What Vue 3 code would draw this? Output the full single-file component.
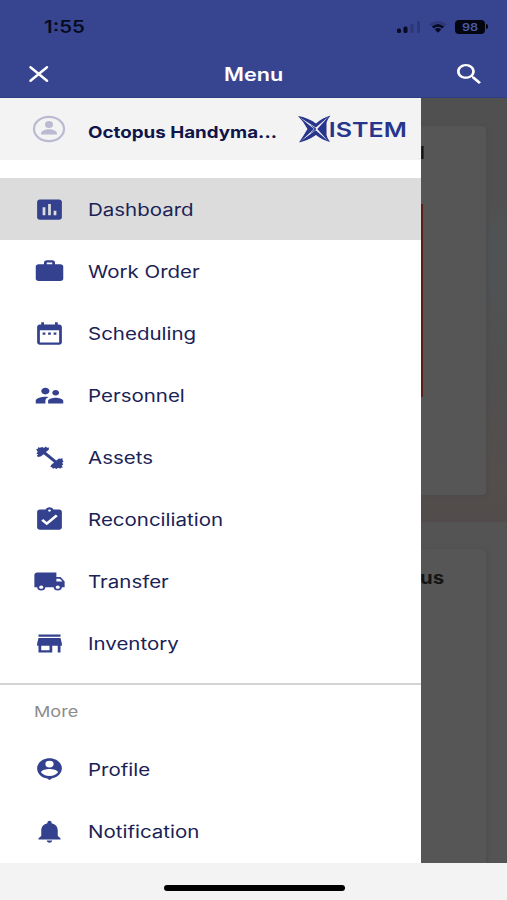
<script setup>
const mainItems = [
  { label: 'Dashboard', icon: 'M19 3H5c-1.1 0-2 .9-2 2v14c0 1.1.9 2 2 2h14c1.1 0 2-.9 2-2V5c0-1.1-.9-2-2-2zM9 17H7v-7h2v7zm4 0h-2V7h2v10zm4 0h-2v-4h2v4z', active: true },
  { label: 'Work Order', icon: 'M20 5.500h-4V4c0-1.11-.89-2-2-2h-4c-1.11 0-2 .89-2 2v1.500H4c-1.11 0-2 .89-2 2v11c0 1.11.89 2 2 2h16c1.11 0 2-.89 2-2v-11c0-1.11-.89-2-2-2zm-6 0h-4V4h4v1.500z' },
  { label: 'Scheduling', icon: 'M9 11H7v2h2v-2zm4 0h-2v2h2v-2zm4 0h-2v2h2v-2zm2-7h-1V2h-2v2H8V2H6v2H5c-1.11 0-1.99.9-1.99 2L3 20c0 1.1.89 2 2 2h14c1.1 0 2-.9 2-2V6c0-1.1-.9-2-2-2zm0 16H5V9h14v11z' },
  { label: 'Personnel', icon: 'M16.5 12c1.38 0 2.49-1.12 2.49-2.5S17.88 7 16.5 7C15.12 7 14 8.12 14 9.5s1.12 2.5 2.5 2.5zM9 11c1.66 0 2.99-1.34 2.99-3S10.66 5 9 5C7.34 5 6 6.34 6 8s1.34 3 3 3zm7.5 3c-1.83 0-5.5.92-5.5 2.75V19h11v-2.25c0-1.83-3.67-2.75-5.5-2.75zM9 13c-2.33 0-7 1.17-7 3.5V19h7v-2.25c0-.85.33-2.34 2.37-3.47C10.5 13.1 9.66 13 9 13z' },
  { label: 'Assets', icon: 'M3.600 11.500L2.800 10.400 3.700 9.300 2.400 8.200 3.500 7 2.300 4.600 3.500 4.200 3.700 2.900 5 3.400 6.700 2.600 8 3.600 9.300 2.200 10.200 3.400 11.600 3.200 11.500 5.200 9.400 7.200 16.900 14.600 18.900 12.900 20.100 13.200 21.500 12.500 21.400 14.300 22.300 15.500 21.200 16.500 22 18.200 20.900 19.200 21.700 20.900 20.300 21 19.800 22 18.500 21.200 16.900 22.200 15.800 21.300 14.600 22 13.800 20.700 12.600 20.500 13.200 18.700 15.300 16.500 7.800 9 5.500 11z' },
  { label: 'Reconciliation', icon: 'M19 3h-4.180C14.400 1.840 13.300 1 12 1s-2.400.84-2.820 2H5c-1.100 0-2 .9-2 2v14c0 1.100.9 2 2 2h14c1.100 0 2-.9 2-2V5c0-1.100-.9-2-2-2zm-7 0c.55 0 1 .45 1 1s-.45 1-1 1-1-.45-1-1 .45-1 1-1zm-2 14l-4-4 1.410-1.410L10 14.170l6.590-6.590L18 9l-8 8z' },
  { label: 'Transfer', icon: 'M20 8h-3V4H3c-1.100 0-2 .9-2 2v11h2c0 1.660 1.340 3 3 3s3-1.340 3-3h6c0 1.660 1.340 3 3 3s3-1.340 3-3h2v-5l-3-4zM6 18.500c-.83 0-1.500-.67-1.500-1.500s.67-1.500 1.500-1.500 1.500.67 1.500 1.500-.67 1.500-1.500 1.500zm13.500-9l1.960 2.500H17V9.500h2.500zm-1.500 9c-.83 0-1.500-.67-1.500-1.500s.67-1.500 1.500-1.500 1.500.67 1.500 1.500-.67 1.500-1.500 1.500z' },
  { label: 'Inventory', icon: 'M20 4H4v2h16V4zm1 10v-2l-1-5H4l-1 5v2h1v6h10v-6h4v6h2v-6h1zm-9 4H6v-4h6v4z' },
]
const moreItems = [
  { label: 'Profile', icon: 'M12 2c-5 0-9 4-9 9 0 4.400 3 8 7 8.800l2 1.600 2-1.600c4-.8 7-4.400 7-8.800 0-5-4-9-9-9zm0 2.200a3 3 0 1 1 0 6 3 3 0 0 1 0-6zm0 13.600c-2.800 0-5-1.200-6.200-3.300.1-2 4.100-3 6.200-3s6.100 1 6.200 3c-1.200 2.100-3.400 3.300-6.200 3.300z' },
  { label: 'Notification', icon: 'M12 22c1.100 0 2-.9 2-2h-4c0 1.100.89 2 2 2zm6-6v-5c0-3.070-1.640-5.640-4.500-6.320V4c0-.83-.67-1.500-1.500-1.500s-1.500.67-1.500 1.500v.68C7.630 5.360 6 7.920 6 11v5l-2 2v1h16v-1l-2-2z' },
]
</script>

<template>
  <div class="screen">
    <header class="header">
      <div class="status">
        <span class="time">1:55</span>
        <div class="indicators">
          <svg class="signal" viewBox="0 0 24 12">
            <rect x="0" y="7.500" width="4" height="4.500" rx="1.500" />
            <rect x="6.500" y="5.500" width="4" height="6.500" rx="1.500" />
            <rect class="weak" x="13.500" y="3" width="3" height="9" rx="1" />
            <rect class="weak" x="20" y="0" width="3" height="12" rx="1" />
          </svg>
          <svg class="wifi" viewBox="0 0 18 12" preserveAspectRatio="none">
            <path class="weak" d="M0 3.500Q9-3.500 18 3.500L16 5Q9-.5 2 5z" />
            <path d="M2.800 5.600Q9 .2 15.200 5.600L13.200 7.500Q9 4.200 4.800 7.500z" />
            <path d="M5.800 8.400Q9 5.800 12.200 8.400L9 11.800z" />
          </svg>
          <span class="battery"><span class="charge">98</span></span>
        </div>
      </div>
      <div class="toolbar">
        <svg class="close" viewBox="0 0 20 16"><path d="M1.500 1.200l16.500 13.600M18 1.200L1.500 14.800" /></svg>
        <h1 class="title">Menu</h1>
        <svg class="search" viewBox="3 3 17.500 17.500" preserveAspectRatio="none"><path d="M15.500 14h-.79l-.28-.27C15.410 12.590 16 11.110 16 9.500 16 5.910 13.090 3 9.500 3S3 5.910 3 9.500 5.910 16 9.500 16c1.610 0 3.090-.59 4.230-1.570l.27.28v.79l5 4.990L20.490 19l-4.990-5zm-6 0C7.010 14 5 11.990 5 9.500S7.010 5 9.500 5 14 7.010 14 9.500 11.990 14 9.500 14z" /></svg>
      </div>
    </header>

    <main class="body">
      <nav class="drawer">
        <div class="account">
          <svg class="avatar" viewBox="0 0 34 28" preserveAspectRatio="none">
            <ellipse class="ring" cx="17" cy="14" rx="15" ry="12.200" />
            <ellipse cx="17" cy="9.500" rx="4" ry="3.500" />
            <path d="M9 19.500v-1.300c0-2.300 4.200-4 8-4s8 1.700 8 4v1.300z" />
          </svg>
          <span class="name"><span class="wide">Octopus Handyma...</span></span>
          <svg class="logo" viewBox="0 0 110 28">
            <path d="M0 1Q10 2.500 18 8.500Q24 3 32.500.5Q29 5 28.500 8V20Q29 23 32 27Q24 25 18 20Q10 25.500 1 27.500Q6 20 9.500 14Q6 7 0 1z" />
            <path class="cut" d="M2 2.500L17.800 12.600 30.500 1.800 19.300 14 30 26 17.700 15.300 3 26 16 14z" />
            <path d="M12 9.500L17.500 13 18.200 14 17.500 15 12 19 16.500 14z" />
            <text x="30.800" y="22" textLength="78" lengthAdjust="spacingAndGlyphs">ISTEM</text>
          </svg>
        </div>

        <ul class="list">
          <li v-for="item in mainItems" :key="item.label" class="row" :class="{ active: item.active }">
            <svg class="icon" viewBox="0 0 24 24" preserveAspectRatio="none"><path :d="item.icon" /></svg>
            <span class="wide">{{ item.label }}</span>
          </li>
        </ul>

        <div class="more"><span class="wide">More</span></div>
        <ul class="extra">
          <li v-for="item in moreItems" :key="item.label" class="row">
            <svg class="icon" viewBox="0 0 24 24" preserveAspectRatio="none"><path :d="item.icon" /></svg>
            <span class="wide">{{ item.label }}</span>
          </li>
        </ul>
      </nav>

      <section class="backdrop">
        <div class="card first">
          <span class="letter">l</span>
          <div class="alert"></div>
        </div>
        <div class="lower">
          <div class="card second"><span class="heading">us</span></div>
        </div>
      </section>
    </main>

    <footer class="footer"><div class="home"></div></footer>
  </div>
</template>

<style>
body { background: #f3f3f3; }
</style>

<style scoped>
* { box-sizing: border-box; }
.screen {
  width: 507px;
  height: 900px;
  display: flex;
  flex-direction: column;
  overflow: hidden;
  font-family: Inter, "Liberation Sans", sans-serif;
}
.header { height: 98px; background: #374591; flex: none; border-bottom: 1px solid #303c83; }
.status {
  height: 50px;
  padding: 3px 19px 0 44px;
  display: flex;
  align-items: center;
  justify-content: space-between;
}
.time {
  font-size: 17px;
  font-weight: 600;
  color: #070b22;
  transform: scaleX(1.2);
  transform-origin: left;
}
.indicators { display: flex; align-items: center; color: #070b22; }
.indicators svg { fill: #070b22; }
.indicators .weak { fill: #2c3777; }
.signal { width: 24px; height: 12px; margin-right: 8px; }
.wifi { width: 18px; height: 12px; margin-right: 8px; }
.battery {
  position: relative;
  width: 30px;
  height: 14px;
  border-radius: 4px;
  background: #03050f;
  display: flex;
  align-items: center;
  justify-content: center;
  margin-right: 3px;
}
.battery::after {
  content: "";
  position: absolute;
  right: -3px;
  top: 4.500px;
  width: 2px;
  height: 5px;
  border-radius: 0 2px 2px 0;
  background: #03050f;
}
.charge { font-size: 11px; font-weight: 600; color: #4a58a2; transform: scaleX(1.150); }
.toolbar {
  height: 47px;
  padding: 0 26px 0 29px;
  display: flex;
  align-items: center;
  justify-content: space-between;
}
.close { width: 20px; height: 16px; fill: none; stroke: #fff; stroke-width: 2.400; stroke-linecap: round; }
.title { margin: 0; padding-top: 2px; color: #fff; font-size: 18px; font-weight: 600; line-height: 1; transform: translateX(1px) scaleX(1.200); }
.search { width: 24px; height: 20px; fill: #fff; }
.body { display: flex; height: 765px; flex: none; }
.drawer { width: 421px; background: #fff; flex: none; color: #1b2256; }
.account {
  height: 62px;
  padding: 0 12px 0 32px;
  background: #f3f3f3;
  display: flex;
  align-items: center;
}
.avatar { width: 34px; height: 28px; flex: none; fill: #babad3; }
.ring { fill: none; stroke: #babad3; stroke-width: 2.200; }
.name {
  width: 201px;
  margin-left: 22px;
  padding-top: 5px;
  color: #10154a;
  font-size: 16px;
  font-weight: 700;
  white-space: nowrap;
}
.wide { display: inline-block; transform: scaleX(1.205); transform-origin: left; }
.name .wide { transform: scaleX(1.173); }
.logo { width: 110px; height: 28px; margin-left: 9px; flex: none; fill: #28358c; }
.logo .cut { fill: #f3f3f3; }
.logo text { font-family: Inter, sans-serif; font-size: 20px; font-weight: 600; }
ul { list-style: none; margin: 0; padding: 0; }
.list { padding: 18px 0 9px; border-bottom: 2px solid #d3d3d5; }
.row { height: 62px; padding-left: 33px; display: flex; align-items: center; gap: 22px; font-size: 17px; }
.row .wide { padding-top: 2px; margin-left: -.5px; }
.row.active { background: #dcdcdc; }
.icon { width: 33px; height: 27px; fill: #33418f; flex: none; }
.more { height: 53px; padding: 0 0 0 33.500px; display: flex; align-items: center; color: #8c8c8c; font-size: 15px; }
.backdrop {
  flex: 1;
  min-width: 0;
  overflow: hidden;
  padding-top: 28px;
  background: linear-gradient(#505050 0, #505050 100px, #505355 150px, #505050 260px, #544e4d 380px, #514c4b 424px, #545454 424px);
}
.card { width: 65px; background: #565656; box-shadow: 1px 1px 4px #4b4b4b; }
.first { height: 369px; border-radius: 0 4px 4px 0; padding-top: 17px; }
.letter { display: block; height: 20px; line-height: 20px; font-size: 17px; font-weight: 700; color: #151515; margin-left: -1px; }
.alert { width: 1.500px; height: 193px; margin-top: 41px; background: #5b1f1b; }
.lower { padding-top: 54px; }
.second { height: 340px; padding-top: 17px; background: #565656; border-radius: 0 4px 0 0; }
.heading { display: inline-block; font-size: 17px; font-weight: 700; color: #151515; line-height: 24px; transform: scaleX(1.200); transform-origin: left; margin-left: -1px; }
.footer { flex: 1; background: #f3f3f3; display: flex; justify-content: center; padding: 22px 0 0 1px; }
.home { width: 181px; height: 6px; border-radius: 3px; background: #000; }
</style>
